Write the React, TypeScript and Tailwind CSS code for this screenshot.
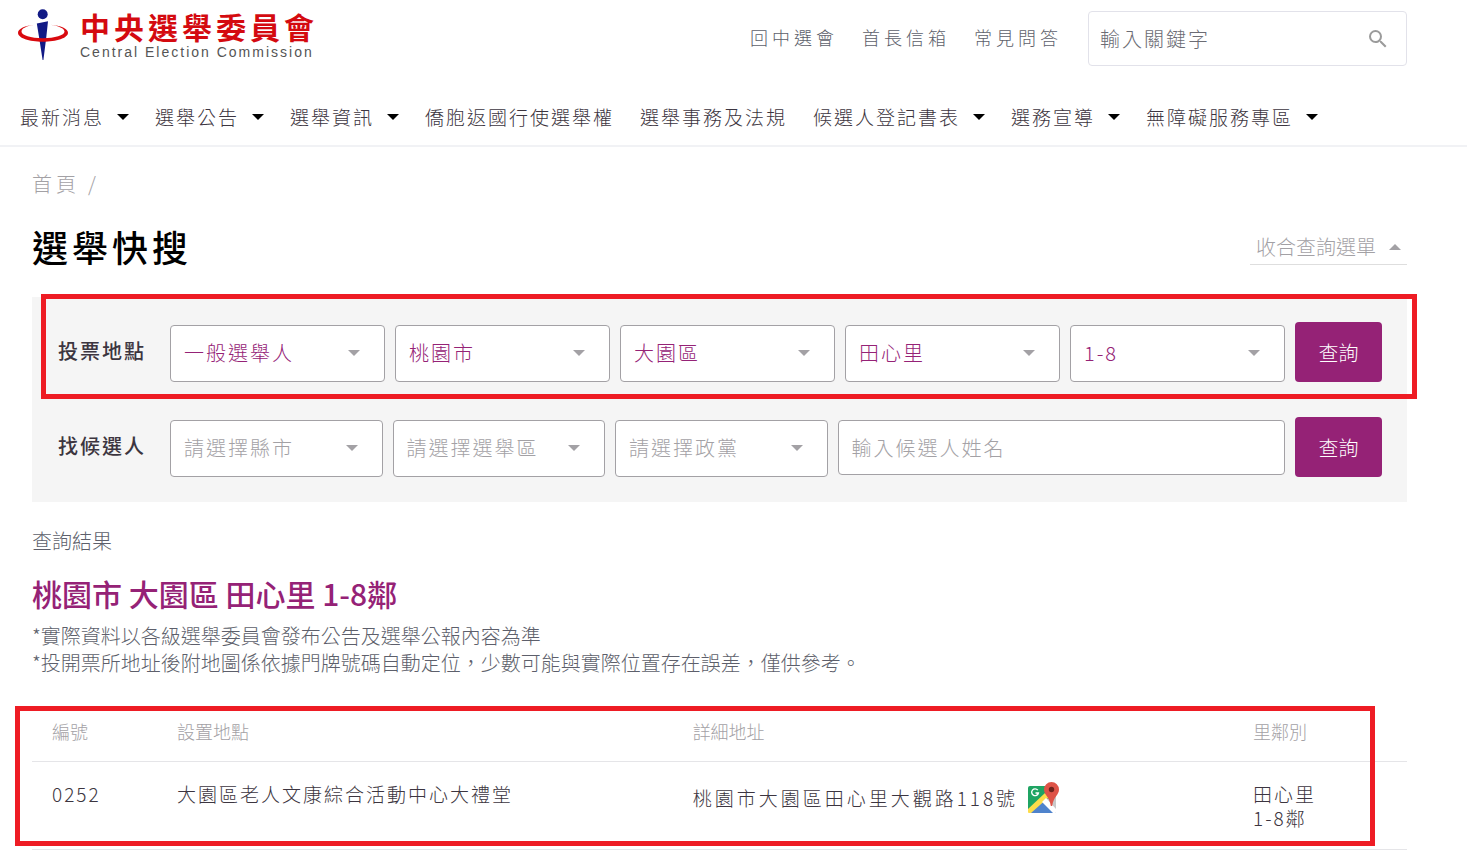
import { useState } from 'react';
import { MdSearch } from 'react-icons/md';

interface SelectFieldProps {
    label: string;
    options: string[];
    muted?: boolean;
}

interface Place {
    id: string;
    name: string;
    address: string;
    village: string;
    neighborhood: string;
}

const topLinks = ['回中選會', '首長信箱', '常見問答'];

const navItems = [
    { title: '最新消息', menu: true },
    { title: '選舉公告', menu: true },
    { title: '選舉資訊', menu: true },
    { title: '僑胞返國行使選舉權', menu: false },
    { title: '選舉事務及法規', menu: false },
    { title: '候選人登記書表', menu: true },
    { title: '選務宣導', menu: true },
    { title: '無障礙服務專區', menu: true },
];

const places: Place[] = [
    {
        id: '0252',
        name: '大園區老人文康綜合活動中心大禮堂',
        address: '桃園市大園區田心里大觀路118號',
        village: '田心里',
        neighborhood: '1-8鄰',
    },
];

function Caret({ className = '' }: { className?: string }) {
    return (
        <svg width="12" height="6" viewBox="0 0 12 6" fill="currentColor" className={className} aria-hidden="true">
            <path d="M0 0h12L6 6z" />
        </svg>
    );
}

function Emblem() {
    return (
        <svg width="50" height="52" viewBox="0 0 50 52" aria-hidden="true">
            <circle cx="24.700" cy="5.200" r="5" fill="#121a85" />
            <path d="M18.800 14.500 30 12.200 28.200 29 25.400 51h-.8L21.200 29z" fill="#121a85" />
            <path
                d="M17 15.800C7 16.600 0 19.800 0 23.800 0 29 11 32.800 24.800 32.800S50 29 50 23.800c0-4-7-7.200-18-8 8.500 1.200 14.500 3.600 14.500 6.800 0 4-9.700 6.600-21.700 6.600S3.500 26.600 3.500 22.600c0-3.200 5-5.600 13.500-6.800z"
                fill="#d90a0f"
            />
        </svg>
    );
}

function MapIcon() {
    return (
        <svg width="32" height="32" viewBox="0 0 32 32" aria-hidden="true">
            <path d="M2 4h24a2 2 0 0 1 2 2v24H2a2 2 0 0 1-2-2V6a2 2 0 0 1 2-2z" fill="#1fa463" />
            <path d="M28 14v17L15 18z" fill="#c9c9c9" />
            <path d="M14 18 2 31h24z" fill="#4f83cc" />
            <path d="M0 27 17 11l4 4L3 31H1a1 1 0 0 1-1-1z" fill="#fddc4a" />
            <path d="m14 20 4-4 10 11v3l-1 1h-2z" fill="#fff" />
            <path d="M9.800 8.200A3.400 3.400 0 1 0 10.400 11H7.500" fill="none" stroke="#fff" strokeWidth="1.400" />
            <path d="M23.500 0a7.500 7.500 0 0 1 7.500 7.500c0 5.500-5.500 7-6.800 16.500h-1.400C21.500 14.500 16 13 16 7.500A7.500 7.500 0 0 1 23.500 0z" fill="#de5347" />
            <circle cx="23.500" cy="7.500" r="2.700" fill="#6f231c" />
        </svg>
    );
}

function SelectField({ label, options, muted = false }: SelectFieldProps) {
    return (
        <div className="relative min-w-0">
            <select
                aria-label={label}
                className={`h-[57px] w-full appearance-none rounded border border-[#a3a1a5] bg-white pb-0.5 pl-[13px] pr-10 text-xl tracking-[2px] ${
                    muted ? 'text-[#a3a1a5]' : 'text-[#952276]'
                }`}
            >
                {options.map(option => (
                    <option key={option}>{option}</option>
                ))}
            </select>
            <Caret className="pointer-events-none absolute right-[25px] top-[25px] text-[#a3a1a5]" />
        </div>
    );
}

function SearchButton() {
    return (
        <button type="submit" className="h-[60px] w-[87px] shrink-0 rounded bg-[#952276] pt-0.5 text-xl text-white">
            查詢
        </button>
    );
}

export default function App() {
    const [open, setOpen] = useState(true);

    return (
        <div className="min-h-screen overflow-x-hidden bg-white font-['Noto_Sans_CJK_TC',sans-serif] font-light text-[#3c3540]">
            <header className="border-b-2 border-[#f1f2f5] pl-[18px] pr-[60px] pb-[13px]">
                <div className="flex items-start justify-between">
                    <a href="#" className="flex items-start gap-3 pt-[9px]">
                        <Emblem />
                        <span className="flex flex-col">
                            <span className="text-[30px] leading-[34px] font-bold tracking-[4px] text-[#d40a10]">
                                中央選舉委員會
                            </span>
                            <span className="font-['Liberation_Sans',sans-serif] text-sm leading-[18px] font-normal tracking-[2px] text-[#555]">
                                Central Election Commission
                            </span>
                        </span>
                    </a>
                    <div className="flex items-center pt-[11px]">
                        <ul className="mr-[26px] mb-1 flex gap-6 text-lg tracking-[4px] text-[#5d5f6b]">
                            {topLinks.map(link => (
                                <li key={link}>
                                    <a href="#">{link}</a>
                                </li>
                            ))}
                        </ul>
                        <form className="flex h-[55px] w-[319px] items-center rounded border border-[#e2e2ea] pl-[11px] pr-4">
                            <input
                                type="text"
                                aria-label="輸入關鍵字"
                                placeholder="輸入關鍵字"
                                className="min-w-0 flex-1 text-xl tracking-[2px] outline-none placeholder:text-[#6c6c74]"
                            />
                            <button type="button" aria-label="搜尋" className="text-[#9b9b9b]">
                                <MdSearch size={24} />
                            </button>
                        </form>
                    </div>
                </div>

                <nav className="mt-9">
                    <ul className="flex gap-[26px] pl-0.5 text-[19px] leading-[30px] tracking-[2px] whitespace-nowrap">
                        {navItems.map(item => (
                            <li key={item.title}>
                                <a href="#" className="flex items-center gap-[13px]">
                                    {item.title}
                                    {item.menu && <Caret className="text-black" />}
                                </a>
                            </li>
                        ))}
                    </ul>
                </nav>
            </header>

            <main className="pl-8 pr-[60px]">
                <div className="pt-[23px] text-xl leading-7 tracking-[4px] text-[#a3a1a5]">
                    <a href="#">首頁</a>
                    <span className="ml-2">/</span>
                </div>

                <div className="mt-[23px] flex items-end justify-between">
                    <h1 className="text-4xl leading-[50px] font-medium tracking-[4px] text-black">選舉快搜</h1>
                    <button
                        type="button"
                        onClick={() => setOpen(!open)}
                        className="mb-1.5 flex items-center gap-[13px] border-b border-[#dedede] px-1.5 pb-px text-xl leading-8 text-[#a3a1a5]"
                    >
                        收合查詢選單
                        <Caret className={open ? 'rotate-180' : ''} />
                    </button>
                </div>

                {open && (
                    <section className="relative mt-[26px] flex flex-col gap-[35px] bg-[#f5f5f5] py-[25px] pl-[26px] pr-[25px]">
                        <form className="flex items-end gap-2.5">
                            <div className="w-[102px] shrink-0 self-center pb-0.5 text-xl font-medium tracking-[2px]">投票地點</div>
                            <div className="grid flex-1 grid-cols-5 gap-2.5">
                                <SelectField label="選舉人類別" options={['一般選舉人']} />
                                <SelectField label="縣市" options={['桃園市']} />
                                <SelectField label="鄉鎮市區" options={['大園區']} />
                                <SelectField label="村里" options={['田心里']} />
                                <SelectField label="鄰" options={['1-8']} />
                            </div>
                            <SearchButton />
                        </form>
                        <form className="flex items-end gap-2.5">
                            <div className="w-[102px] shrink-0 self-center pb-0.5 text-xl font-medium tracking-[2px]">找候選人</div>
                            <div className="grid flex-1 grid-cols-[19fr_19fr_19fr_40fr] items-start gap-2.5">
                                <SelectField label="候選人縣市" options={['請選擇縣市']} muted />
                                <SelectField label="選舉區" options={['請選擇選舉區']} muted />
                                <SelectField label="政黨" options={['請選擇政黨']} muted />
                                <input
                                    type="text"
                                    aria-label="候選人姓名"
                                    placeholder="輸入候選人姓名"
                                    className="h-[55px] w-full min-w-0 rounded border border-[#a3a1a5] bg-white px-[13px] text-xl tracking-[2px] placeholder:text-[#a3a1a5]"
                                />
                            </div>
                            <SearchButton />
                        </form>
                        {/* Highlight frame around the polling place search */}
                        <div className="pointer-events-none absolute -top-[3px] -right-2.5 left-[9px] h-[105px] border-[5px] border-[#ee1c24]" />
                    </section>
                )}

                <section className="mt-6">
                    <p className="text-xl leading-[30px] text-[#5d5f6b]">查詢結果</p>
                    <h2 className="mt-[17px] text-[30px] leading-10 font-medium text-[#952276]">桃園市 大園區 田心里 1-8鄰</h2>
                    <div className="mt-[9px] text-xl leading-[27px] text-[#5d5f6b]">
                        <p>*實際資料以各級選舉委員會發布公告及選舉公報內容為準</p>
                        <p>*投開票所地址後附地圖係依據門牌號碼自動定位，少數可能與實際位置存在誤差，僅供參考。</p>
                    </div>

                    <div className="relative mt-[26px]">
                        <table className="w-full table-fixed border-collapse text-left">
                            <thead>
                                <tr className="h-[59px] border-b border-[#e5e5e8] text-lg text-[#a3a1a5]">
                                    <th className="w-[125px] pl-5 font-light">編號</th>
                                    <th className="w-[37.5%] pl-5 font-light">設置地點</th>
                                    <th className="pl-5 font-light">詳細地址</th>
                                    <th className="w-[174px] pl-5 font-light">里鄰別</th>
                                </tr>
                            </thead>
                            <tbody>
                                {places.map(place => (
                                    <tr key={place.id} className="border-b border-[#e5e5e8] align-top text-[19px] leading-6 tracking-[2px]">
                                        <td className="pt-5 pb-[19px] pl-5">{place.id}</td>
                                        <td className="pt-5 pb-[19px] pl-5">{place.name}</td>
                                        <td className="pt-5 pb-[19px] pl-5">
                                            <div className="flex items-center gap-2.5 tracking-[3px]">
                                                {place.address}
                                                <a href="#" aria-label="地圖">
                                                    <MapIcon />
                                                </a>
                                            </div>
                                        </td>
                                        <td className="pt-5 pb-[19px] pl-5">
                                            <div>{place.village}</div>
                                            <div>{place.neighborhood}</div>
                                        </td>
                                    </tr>
                                ))}
                            </tbody>
                        </table>
                        {/* Highlight frame around the result row */}
                        <div className="pointer-events-none absolute top-1 right-8 bottom-1 -left-[17px] border-[5px] border-[#ee1c24]" />
                    </div>
                </section>
            </main>
        </div>
    );
}
